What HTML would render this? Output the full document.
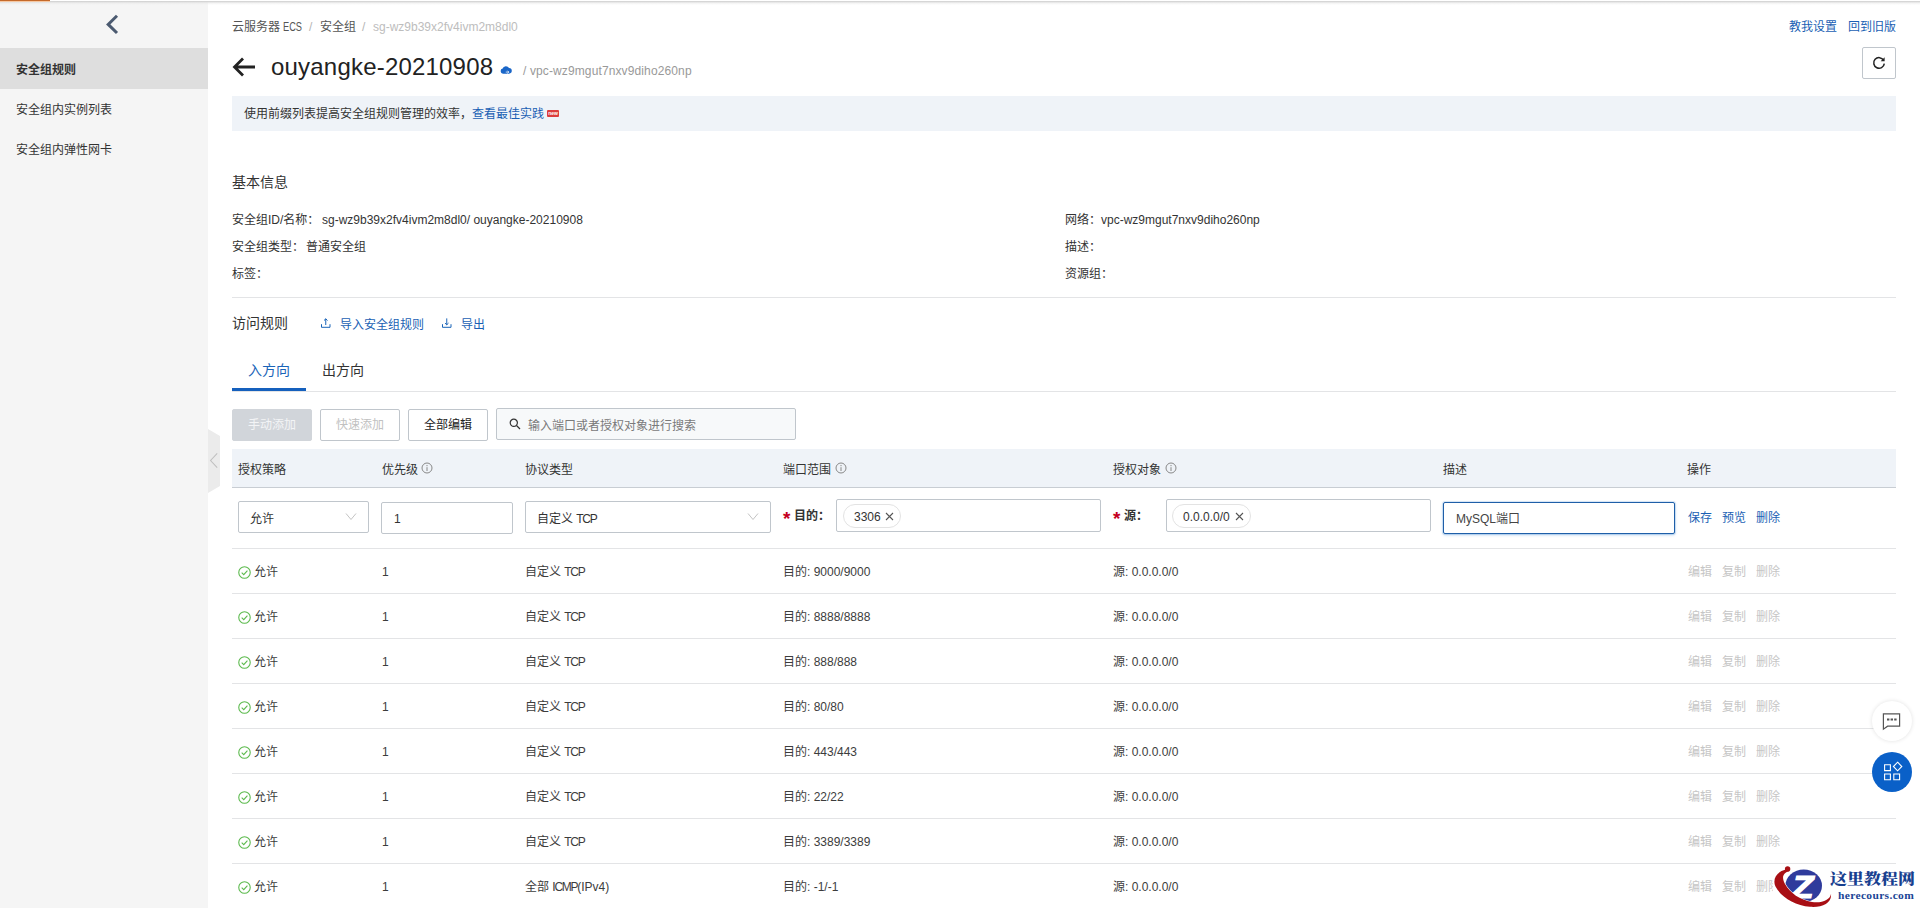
<!DOCTYPE html>
<html lang="zh-CN">
<head>
<meta charset="utf-8">
<title>安全组规则</title>
<style>
*{box-sizing:border-box;margin:0;padding:0}
html,body{width:1920px;height:908px;overflow:hidden;background:#fff}
body{font-family:"Liberation Sans","Noto Sans CJK SC",sans-serif;font-size:12px;color:#333;position:relative}
.abs{position:absolute;white-space:nowrap}
.t{position:absolute;white-space:nowrap;line-height:20px;height:20px;margin-top:1px}
.t14{margin-top:0;font-size:14px}
a{color:#1a5fb4;text-decoration:none}
.blue{color:#0064c8}
.gray{color:#999}
.dis{color:#c6c6c6}
#side{position:absolute;left:0;top:0;width:208px;height:908px;background:#f5f5f5}
#topline{position:absolute;left:0;top:0;width:1920px;height:5px;background:linear-gradient(#fff 0,#fff 1px,rgba(200,200,200,.9) 1px,rgba(215,215,215,.8) 2px,rgba(230,230,230,.5) 3px,rgba(240,240,240,0) 5px)}
#orange{position:absolute;left:0;top:0;width:50px;height:2px;background:linear-gradient(#c56a2b 0,#c56a2b 1px,#f5c8a3 1px,#f5c8a3 2px)}
.nav{position:absolute;left:0;width:208px;height:40px;line-height:45px;padding-left:16px;font-size:12px;color:#333}
.nav.on{background:#dedede;font-weight:700;color:#333}
.ast{color:#c4001d;font-weight:700;font-size:19px;line-height:22px;height:22px}
.cap{letter-spacing:-1.3px}
.hr{position:absolute;height:1px;background:#e3e4e6}
.box{position:absolute;border:1px solid #c0c6cc;background:#fff;border-radius:2px}
.btn{position:absolute;height:32px;line-height:30px;text-align:center;border:1px solid #c0c6cc;border-radius:2px;font-size:12px;background:#fff;color:#333}
.th{position:absolute;top:460px;line-height:20px;height:20px;color:#333;white-space:nowrap}
.row{position:absolute;left:232px;width:1664px;height:45px;border-bottom:1px solid #e3e4e6;color:#3c3c3c}
.row>span{position:absolute;top:13px;line-height:20px;white-space:nowrap}
.tag{position:absolute;height:24px;line-height:24px;border:1px solid #e3e3e3;border-radius:12px;padding:0 0 0 10px;color:#333;background:#fff;white-space:nowrap}
</style>
</head>
<body>
<div id="side"></div>
<div id="topline"></div>
<div id="orange"></div>

<!-- sidebar -->
<svg class="abs" style="left:104px;top:13px" width="16" height="23" viewBox="0 0 16 23"><path d="M13 2.8 L4.2 11.4 L13 20" fill="none" stroke="#4b5a70" stroke-width="3"/></svg>
<div class="nav on" style="top:48px;height:41px">安全组规则</div>
<div class="nav" style="top:88px">安全组内实例列表</div>
<div class="nav" style="top:128px">安全组内弹性网卡</div>

<!-- collapse handle -->
<svg class="abs" style="left:208px;top:429px" width="12" height="64" viewBox="0 0 12 64"><path d="M0 0 L12 7 L12 57 L0 64 Z" fill="#ebebeb"/><path d="M9.2 24.3 L2.6 31.5 L9.2 38.7" fill="none" stroke="#c0c0c0" stroke-width="1.1"/></svg>

<!-- breadcrumb -->
<div class="t" style="left:232px;top:16px;color:#555">云服务器</div>
<div class="t" style="left:283px;top:16px;color:#555"><span style="display:inline-block;transform:scaleX(.77);transform-origin:0 50%">ECS</span></div>
<div class="t" style="left:309px;top:16px;color:#b5b5b5">/</div>
<div class="t" style="left:320px;top:16px;color:#555">安全组</div>
<div class="t" style="left:362px;top:16px;color:#b5b5b5">/</div>
<div class="t" style="left:373px;top:16px;color:#bdbdbd">sg-wz9b39x2fv4ivm2m8dl0</div>
<div class="t" style="left:1789px;top:16px"><a>教我设置</a></div>
<div class="t" style="left:1848px;top:16px"><a>回到旧版</a></div>

<!-- title -->
<svg class="abs" style="left:232px;top:56px" width="24" height="22" viewBox="0 0 24 22"><path d="M11 2.5 L2.5 11 L11 19.5 M2.5 11 L23 11" fill="none" stroke="#222" stroke-width="2.8"/></svg>
<div class="abs" id="title" style="left:271px;top:49px;font-size:24px;line-height:36px;color:#222;letter-spacing:0.2px">ouyangke-20210908</div>
<svg class="abs" style="left:500px;top:65px" width="12" height="9.5" viewBox="0 0 13 11"><path d="M3 10 A3 3 0 0 1 2.6 4.1 A4 4 0 0 1 10 3.6 A3.2 3.2 0 0 1 10 10 Z" fill="#1a66c8"/><path d="M6.2 8.2 L9.6 8.2 M8.2 6.6 L9.8 8.2 L8.2 9.8" fill="none" stroke="#fff" stroke-width=".9"/></svg>
<div class="t" style="left:523px;top:60px;color:#999;letter-spacing:.12px">/ vpc-wz9mgut7nxv9diho260np</div>
<div class="box" style="left:1862px;top:47px;width:34px;height:32px"></div>
<svg class="abs" style="left:1871px;top:55px" width="16" height="16" viewBox="0 0 16 16"><path d="M12.6 5.2 A5.3 5.3 0 1 0 13.3 8.6" fill="none" stroke="#222" stroke-width="1.5"/><path d="M13.6 2.2 L13.6 6.2 L9.6 6.2 Z" fill="#222"/></svg>

<!-- notice -->
<div class="abs" style="left:232px;top:96px;width:1664px;height:35px;background:#eff3f8"></div>
<div class="t" style="left:244px;top:103px;color:#333">使用前缀列表提高安全组规则管理的效率，<a>查看最佳实践</a></div>
<div class="abs" style="left:547px;top:110px;width:12px;height:7px;background:#dc3c3c;border-radius:1px;color:#fff;font-size:5px;line-height:6px;text-align:center;font-weight:700;overflow:hidden">new</div>

<!-- basic info -->
<div class="t t14" style="left:232px;top:172px;color:#333">基本信息</div>
<div class="t" style="left:232px;top:209px">安全组ID/名称：</div>
<div class="t" style="left:322px;top:209px">sg-wz9b39x2fv4ivm2m8dl0/ ouyangke-20210908</div>
<div class="t" style="left:232px;top:236px">安全组类型：</div>
<div class="t" style="left:306px;top:236px">普通安全组</div>
<div class="t" style="left:232px;top:263px">标签：</div>
<div class="t" style="left:1065px;top:209px">网络：</div>
<div class="t" style="left:1101px;top:209px">vpc-wz9mgut7nxv9diho260np</div>
<div class="t" style="left:1065px;top:236px">描述：</div>
<div class="t" style="left:1065px;top:263px">资源组：</div>
<div class="hr" style="left:232px;top:297px;width:1664px"></div>

<!-- access rules -->
<div class="t t14" style="left:232px;top:313px;color:#333">访问规则</div>
<svg class="abs" style="left:320px;top:317px" width="11" height="11" viewBox="0 0 11 11"><path d="M1.5 7.2 V10.3 H10 V7.2 M5.75 8 V1.8 M4 3.5 L5.75 1.8 L7.5 3.5" fill="none" stroke="#1a64b8" stroke-width="1"/></svg>
<div class="t" style="left:340px;top:314px"><a>导入安全组规则</a></div>
<svg class="abs" style="left:441px;top:317px" width="11" height="11" viewBox="0 0 11 11"><path d="M1.5 7.2 V10.3 H10 V7.2 M5.75 1.4 V7.8 M4 6.1 L5.75 7.8 L7.5 6.1" fill="none" stroke="#1a64b8" stroke-width="1"/></svg>
<div class="t" style="left:461px;top:314px"><a>导出</a></div>

<!-- tabs -->
<div class="t t14" style="left:248px;top:360px;color:#1a64b8">入方向</div>
<div class="t t14" style="left:322px;top:360px;color:#333">出方向</div>
<div class="hr" style="left:232px;top:391px;width:1664px"></div>
<div class="abs" style="left:232px;top:388px;width:74px;height:3px;background:#1560bd"></div>

<!-- toolbar -->
<div class="btn" style="left:232px;top:409px;width:80px;background:#d1d5da;border-color:#d1d5da;color:#f3f4f6">手动添加</div>
<div class="btn" style="left:320px;top:409px;width:80px;color:#c1c1c1">快速添加</div>
<div class="btn" style="left:408px;top:409px;width:80px;color:#222">全部编辑</div>
<div class="box" style="left:496px;top:408px;width:300px;height:32px;background:#f7f9fa"></div>
<svg class="abs" style="left:509px;top:418px" width="12" height="12" viewBox="0 0 12 12"><circle cx="4.8" cy="4.8" r="3.6" fill="none" stroke="#333" stroke-width="1.2"/><path d="M7.5 7.5 L11 11" stroke="#333" stroke-width="1.3"/></svg>
<div class="t" style="left:528px;top:415px;color:#7a7a7a">输入端口或者授权对象进行搜索</div>

<!-- table header -->
<div class="abs" style="left:232px;top:449px;width:1664px;height:39px;background:#eff3f8;border-bottom:1px solid #c8cdd3"></div>
<div class="th" style="left:238px">授权策略</div>
<div class="th" style="left:382px">优先级</div>
<div class="th" style="left:525px">协议类型</div>
<div class="th" style="left:783px">端口范围</div>
<div class="th" style="left:1113px">授权对象</div>
<div class="th" style="left:1443px">描述</div>
<div class="th" style="left:1687px">操作</div>
<svg class="abs" style="left:421px;top:462px" width="12" height="12" viewBox="0 0 12 12"><circle cx="6" cy="6" r="5" fill="none" stroke="#888" stroke-width="1"/><path d="M6 5.2 V9 M6 3 V4.2" stroke="#888" stroke-width="1"/></svg>
<svg class="abs" style="left:835px;top:462px" width="12" height="12" viewBox="0 0 12 12"><circle cx="6" cy="6" r="5" fill="none" stroke="#888" stroke-width="1"/><path d="M6 5.2 V9 M6 3 V4.2" stroke="#888" stroke-width="1"/></svg>
<svg class="abs" style="left:1165px;top:462px" width="12" height="12" viewBox="0 0 12 12"><circle cx="6" cy="6" r="5" fill="none" stroke="#888" stroke-width="1"/><path d="M6 5.2 V9 M6 3 V4.2" stroke="#888" stroke-width="1"/></svg>

<!-- edit row -->
<div class="box" style="left:238px;top:501px;width:131px;height:32px"></div>
<div class="t" style="left:250px;top:508px">允许</div>
<svg class="abs" style="left:345px;top:512px" width="12" height="9" viewBox="0 0 12 9"><path d="M1 1.5 L6 7.5 L11 1.5" fill="none" stroke="#c4c4c4" stroke-width="1"/></svg>
<div class="box" style="left:381px;top:502px;width:132px;height:32px"></div>
<div class="t" style="left:394px;top:508px">1</div>
<div class="box" style="left:525px;top:501px;width:246px;height:32px"></div>
<div class="t" style="left:537px;top:508px">自定义 <span class="cap">TCP</span></div>
<svg class="abs" style="left:747px;top:512px" width="12" height="9" viewBox="0 0 12 9"><path d="M1 1.5 L6 7.5 L11 1.5" fill="none" stroke="#c4c4c4" stroke-width="1"/></svg>

<div class="abs ast" style="left:783px;top:508px">*</div>
<div class="t" style="left:794px;top:505px;font-weight:700;color:#333">目的：</div>
<div class="box" style="left:836px;top:499px;width:265px;height:33px"></div>
<div class="tag" style="left:843px;top:504px;width:58px">3306</div>
<svg class="abs" style="left:885px;top:512px" width="9" height="9" viewBox="0 0 9 9"><path d="M1 1 L8 8 M8 1 L1 8" stroke="#555" stroke-width="1.1"/></svg>
<div class="abs ast" style="left:1113px;top:508px">*</div>
<div class="t" style="left:1124px;top:505px;font-weight:700;color:#333">源：</div>
<div class="box" style="left:1166px;top:499px;width:265px;height:33px"></div>
<div class="tag" style="left:1172px;top:504px;width:79px">0.0.0.0/0</div>
<svg class="abs" style="left:1235px;top:512px" width="9" height="9" viewBox="0 0 9 9"><path d="M1 1 L8 8 M8 1 L1 8" stroke="#555" stroke-width="1.1"/></svg>

<div class="box" style="left:1443px;top:502px;width:232px;height:32px;border:1px solid #1f5fa8;box-shadow:0 0 0 1px rgba(0,100,200,.12), 0 1px 3px rgba(0,100,200,.3)"></div>
<div class="t" style="left:1456px;top:508px;color:#444">MySQL端口</div>
<div class="t" style="left:1688px;top:507px"><a>保存</a></div>
<div class="t" style="left:1722px;top:507px"><a>预览</a></div>
<div class="t" style="left:1756px;top:507px"><a>删除</a></div>
<div class="hr" style="left:232px;top:548px;width:1664px"></div>

<!-- data rows -->
<div id="rows">
<div class="row" style="top:549px"><svg style="position:absolute;left:5.5px;top:17px" width="13" height="13" viewBox="0 0 12 12"><circle cx="6" cy="6" r="5.3" fill="none" stroke="#5cba4d" stroke-width="1"/><path d="M3.4 6.2 L5.3 8 L8.7 4.2" fill="none" stroke="#5cba4d" stroke-width="1"/></svg><span style="left:22px">允许</span><span style="left:150px">1</span><span style="left:293px">自定义 <span class="cap">TCP</span></span><span style="left:551px">目的: 9000/9000</span><span style="left:881px">源: 0.0.0.0/0</span><span class="dis" style="left:1456px">编辑</span><span class="dis" style="left:1490px">复制</span><span class="dis" style="left:1524px">删除</span></div>
<div class="row" style="top:594px"><svg style="position:absolute;left:5.5px;top:17px" width="13" height="13" viewBox="0 0 12 12"><circle cx="6" cy="6" r="5.3" fill="none" stroke="#5cba4d" stroke-width="1"/><path d="M3.4 6.2 L5.3 8 L8.7 4.2" fill="none" stroke="#5cba4d" stroke-width="1"/></svg><span style="left:22px">允许</span><span style="left:150px">1</span><span style="left:293px">自定义 <span class="cap">TCP</span></span><span style="left:551px">目的: 8888/8888</span><span style="left:881px">源: 0.0.0.0/0</span><span class="dis" style="left:1456px">编辑</span><span class="dis" style="left:1490px">复制</span><span class="dis" style="left:1524px">删除</span></div>
<div class="row" style="top:639px"><svg style="position:absolute;left:5.5px;top:17px" width="13" height="13" viewBox="0 0 12 12"><circle cx="6" cy="6" r="5.3" fill="none" stroke="#5cba4d" stroke-width="1"/><path d="M3.4 6.2 L5.3 8 L8.7 4.2" fill="none" stroke="#5cba4d" stroke-width="1"/></svg><span style="left:22px">允许</span><span style="left:150px">1</span><span style="left:293px">自定义 <span class="cap">TCP</span></span><span style="left:551px">目的: 888/888</span><span style="left:881px">源: 0.0.0.0/0</span><span class="dis" style="left:1456px">编辑</span><span class="dis" style="left:1490px">复制</span><span class="dis" style="left:1524px">删除</span></div>
<div class="row" style="top:684px"><svg style="position:absolute;left:5.5px;top:17px" width="13" height="13" viewBox="0 0 12 12"><circle cx="6" cy="6" r="5.3" fill="none" stroke="#5cba4d" stroke-width="1"/><path d="M3.4 6.2 L5.3 8 L8.7 4.2" fill="none" stroke="#5cba4d" stroke-width="1"/></svg><span style="left:22px">允许</span><span style="left:150px">1</span><span style="left:293px">自定义 <span class="cap">TCP</span></span><span style="left:551px">目的: 80/80</span><span style="left:881px">源: 0.0.0.0/0</span><span class="dis" style="left:1456px">编辑</span><span class="dis" style="left:1490px">复制</span><span class="dis" style="left:1524px">删除</span></div>
<div class="row" style="top:729px"><svg style="position:absolute;left:5.5px;top:17px" width="13" height="13" viewBox="0 0 12 12"><circle cx="6" cy="6" r="5.3" fill="none" stroke="#5cba4d" stroke-width="1"/><path d="M3.4 6.2 L5.3 8 L8.7 4.2" fill="none" stroke="#5cba4d" stroke-width="1"/></svg><span style="left:22px">允许</span><span style="left:150px">1</span><span style="left:293px">自定义 <span class="cap">TCP</span></span><span style="left:551px">目的: 443/443</span><span style="left:881px">源: 0.0.0.0/0</span><span class="dis" style="left:1456px">编辑</span><span class="dis" style="left:1490px">复制</span><span class="dis" style="left:1524px">删除</span></div>
<div class="row" style="top:774px"><svg style="position:absolute;left:5.5px;top:17px" width="13" height="13" viewBox="0 0 12 12"><circle cx="6" cy="6" r="5.3" fill="none" stroke="#5cba4d" stroke-width="1"/><path d="M3.4 6.2 L5.3 8 L8.7 4.2" fill="none" stroke="#5cba4d" stroke-width="1"/></svg><span style="left:22px">允许</span><span style="left:150px">1</span><span style="left:293px">自定义 <span class="cap">TCP</span></span><span style="left:551px">目的: 22/22</span><span style="left:881px">源: 0.0.0.0/0</span><span class="dis" style="left:1456px">编辑</span><span class="dis" style="left:1490px">复制</span><span class="dis" style="left:1524px">删除</span></div>
<div class="row" style="top:819px"><svg style="position:absolute;left:5.5px;top:17px" width="13" height="13" viewBox="0 0 12 12"><circle cx="6" cy="6" r="5.3" fill="none" stroke="#5cba4d" stroke-width="1"/><path d="M3.4 6.2 L5.3 8 L8.7 4.2" fill="none" stroke="#5cba4d" stroke-width="1"/></svg><span style="left:22px">允许</span><span style="left:150px">1</span><span style="left:293px">自定义 <span class="cap">TCP</span></span><span style="left:551px">目的: 3389/3389</span><span style="left:881px">源: 0.0.0.0/0</span><span class="dis" style="left:1456px">编辑</span><span class="dis" style="left:1490px">复制</span><span class="dis" style="left:1524px">删除</span></div>
<div class="row" style="top:864px"><svg style="position:absolute;left:5.5px;top:17px" width="13" height="13" viewBox="0 0 12 12"><circle cx="6" cy="6" r="5.3" fill="none" stroke="#5cba4d" stroke-width="1"/><path d="M3.4 6.2 L5.3 8 L8.7 4.2" fill="none" stroke="#5cba4d" stroke-width="1"/></svg><span style="left:22px">允许</span><span style="left:150px">1</span><span style="left:293px">全部 <span class="cap">ICMP</span>(IPv4)</span><span style="left:551px">目的: -1/-1</span><span style="left:881px">源: 0.0.0.0/0</span><span class="dis" style="left:1456px">编辑</span><span class="dis" style="left:1490px">复制</span><span class="dis" style="left:1524px">删除</span></div>
</div>


<!-- floating buttons -->
<div class="abs" style="left:1872px;top:701px;width:40px;height:40px;border-radius:50%;background:#fff;box-shadow:0 0 4px rgba(0,0,0,.12)"></div>
<svg class="abs" style="left:1880px;top:711px" width="24" height="22" viewBox="0 0 24 22"><path d="M3.4 2.8 H19.6 V15.2 H7.6 L3.4 18.2 Z" fill="none" stroke="#555" stroke-width="1.2"/><path d="M7 8.6 h2.4 M10.6 8.6 h2.4 M14.2 8.6 h2.4" stroke="#555" stroke-width="2"/></svg>
<div class="abs" style="left:1872px;top:752px;width:40px;height:40px;border-radius:50%;background:#0a60c8"></div>
<svg class="abs" style="left:1880px;top:760px" width="24" height="24" viewBox="0 0 24 24"><path d="M4.6 4.8 h5.8 v5.8 h-5.8 Z M4.6 14 h5.8 v5.8 h-5.8 Z M13.8 14 h5.8 v5.8 h-5.8 Z M17.6 2.2 L21.8 6.5 L17.6 10.8 L13.4 6.5 Z" fill="none" stroke="#fff" stroke-width="1.1"/></svg>

<!-- watermark -->
<div class="abs" style="left:1773px;top:865px;width:147px;height:43px;background:#fff"></div>
<svg class="abs" style="left:1770px;top:864px" width="66" height="44" viewBox="1770 864 66 44">
<ellipse cx="1803.7" cy="885.7" rx="18.3" ry="16.2" fill="#2f3b9c"/>
<text x="1791.5" y="898.3" font-family="Liberation Sans, sans-serif" font-weight="700" font-style="italic" font-size="31" fill="#fff" stroke="#fff" stroke-width="1.2" textLength="22" lengthAdjust="spacingAndGlyphs">Z</text>
<path d="M1786 869.5 C1777 871.5 1772 879 1775.5 886.5 C1781 897 1795 905.5 1810 906.8 C1822 907.8 1832 903 1831 894 C1830 900 1822 903.3 1812 902 C1800 900 1790 893 1785 884 C1781 877 1783.5 872.5 1789.5 871 Z" fill="#a80f14" stroke="#fff" stroke-width="1.2" paint-order="stroke"/>
<circle cx="1787.6" cy="868.9" r="2.7" fill="#a80f14"/>
</svg>
<div class="abs" style="left:1830px;top:868.5px;font-family:'Liberation Serif','Noto Serif CJK SC',serif;font-weight:900;font-size:17px;line-height:24px;color:#17408f;letter-spacing:0;transform:scaleY(.9);transform-origin:0 0">这里教程网</div>
<div class="abs" id="wm2" style="left:1838px;top:888px;font-family:'Liberation Serif','Noto Serif CJK SC',serif;font-weight:700;font-size:10px;line-height:16px;color:#1b4596;letter-spacing:.3px;transform:scaleX(1.15);transform-origin:0 0">herecours.com</div>

</body>
</html>
